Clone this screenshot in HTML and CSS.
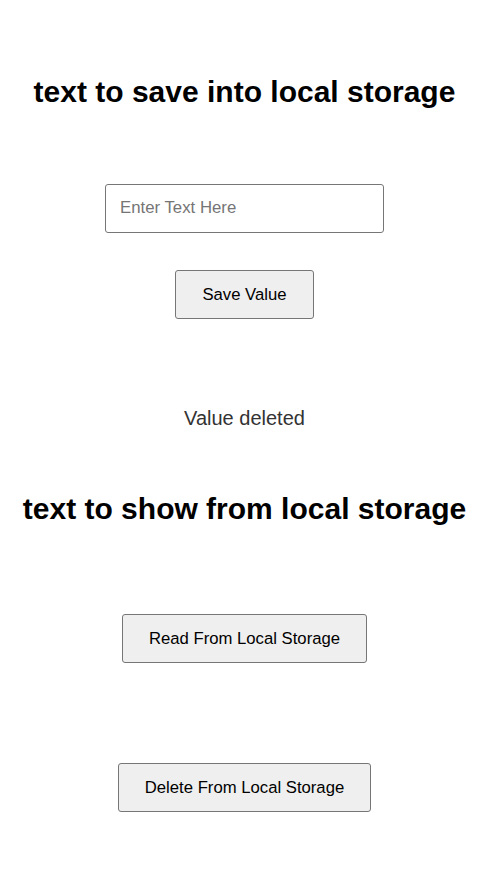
FILE: index.html
```html
<!DOCTYPE html>
<html>
<head>
<meta charset="utf-8">
<link rel="stylesheet" href="styles.css">
</head>
<body>
<main class="page">
  <h1 class="title title-save">text to save into local storage</h1>
  <input class="text-input" type="text" placeholder="Enter Text Here">
  <button class="btn btn-save">Save Value</button>
  <p class="status">Value deleted</p>
  <h1 class="title title-show">text to show from local storage</h1>
  <button class="btn btn-read">Read From Local Storage</button>
  <button class="btn btn-delete">Delete From Local Storage</button>
</main>
</body>
</html>
```
FILE: styles.css
```css
html, body {
  margin: 0;
  padding: 0;
  background: #fff;
}
body {
  font-family: "Liberation Sans", Arial, sans-serif;
  color: #000;
}
.page {
  display: flex;
  flex-direction: column;
  align-items: center;
  padding-right: 5px;
}
.title {
  margin: 0;
  font-size: 30px;
  font-weight: bold;
  line-height: 36px;
  text-align: center;
}
.title-save {
  margin-top: 74px;
}
.text-input {
  box-sizing: border-box;
  width: 279px;
  height: 49px;
  margin-top: 74px;
  padding: 0 14px 2px;
  border: 1px solid #767676;
  border-radius: 3px;
  font-family: "Liberation Sans", Arial, sans-serif;
  font-size: 16.8px;
  color: #000;
  outline: none;
}
.text-input::placeholder {
  color: #757575;
}
.btn {
  box-sizing: border-box;
  height: 49px;
  padding: 0 26px;
  background: #efefef;
  border: 1px solid #767676;
  border-radius: 3px;
  font-family: "Liberation Sans", Arial, sans-serif;
  font-size: 16.7px;
  color: #000;
}
.btn-save {
  margin-top: 37px;
}
.status {
  margin: 87px 0 0;
  font-size: 20px;
  line-height: 24px;
  color: #333;
}
.title-show {
  margin-top: 61px;
}
.btn-read {
  margin-top: 87px;
}
.btn-delete {
  margin-top: 100px;
}
```
